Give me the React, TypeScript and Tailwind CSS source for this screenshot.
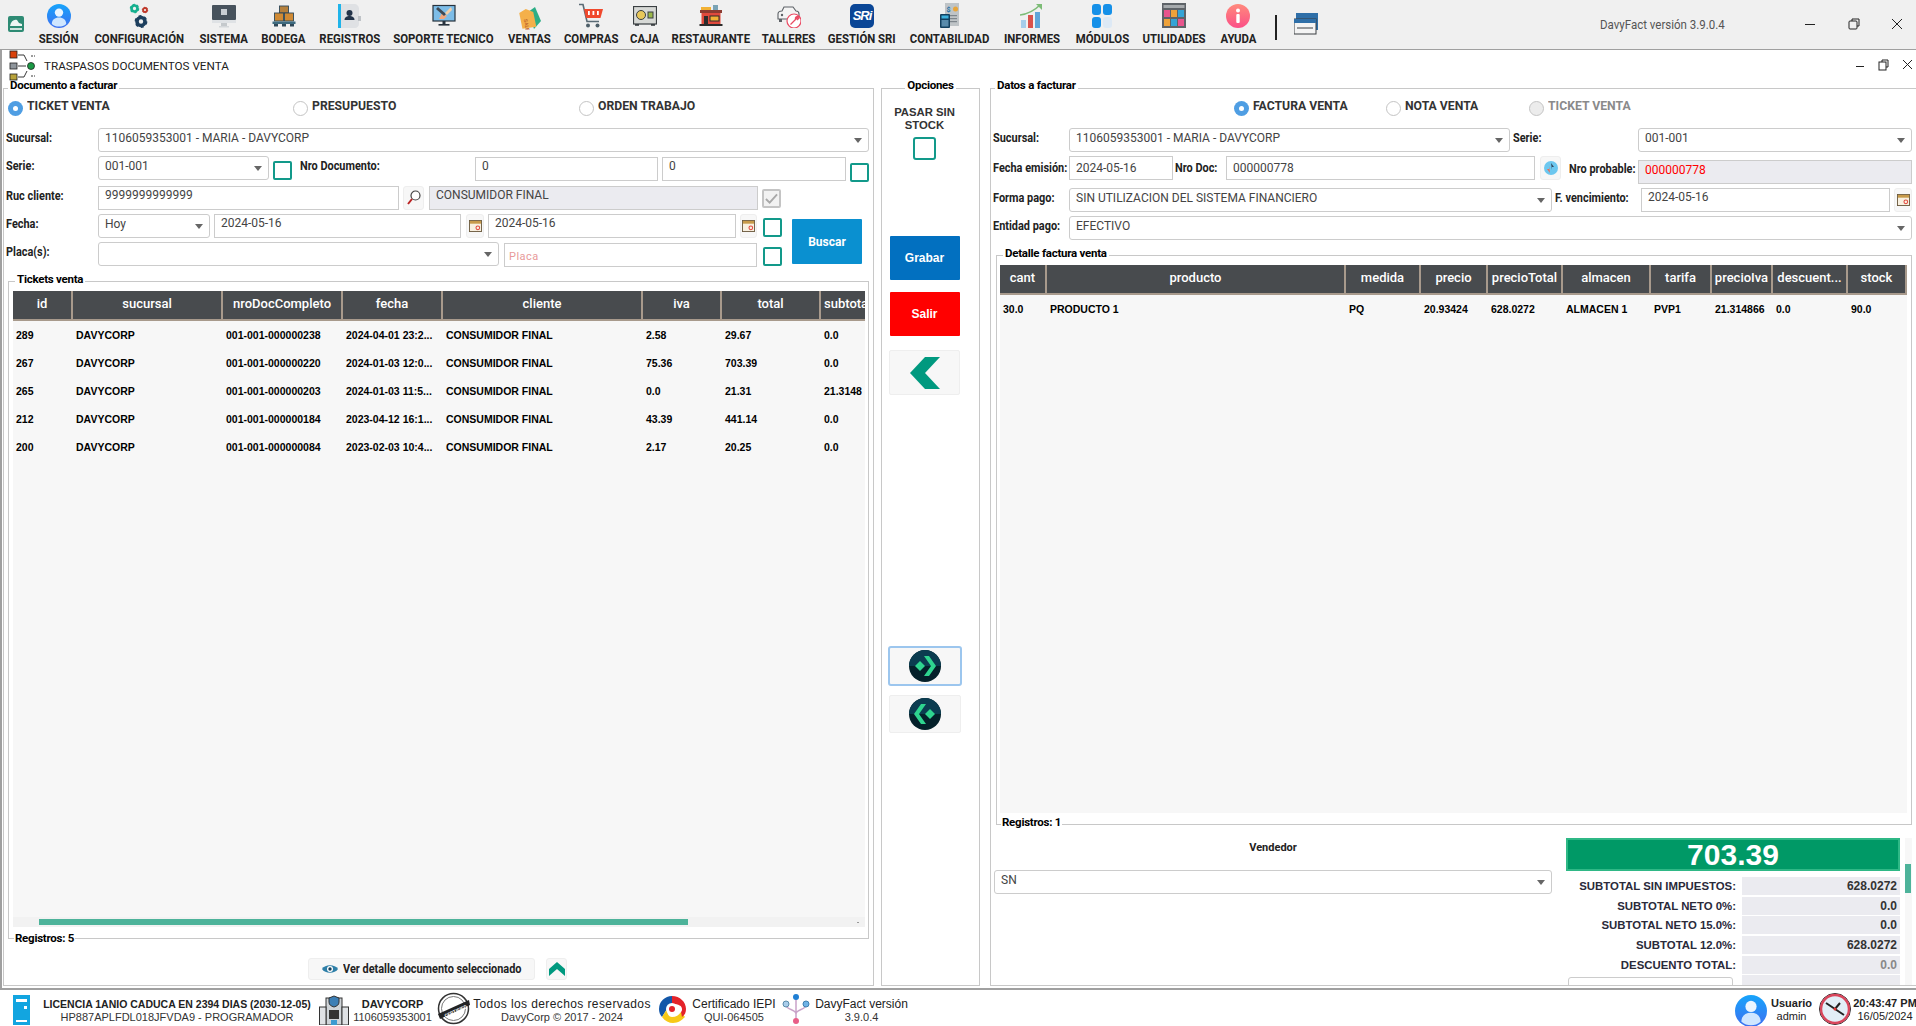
import React from 'react';

const BOLD = "font-['Roboto',sans-serif] font-bold";
const SQUEEZE = 'inline-block origin-left scale-x-[0.91]';

// ---- iconos de la barra superior ----
const UserIcon = ({ id, className }: { id: string; className: string }) => (
  <svg viewBox="0 0 24 24" className={className}>
    <defs>
      <linearGradient id={id} x1="0" y1="0" x2="0" y2="1">
        <stop offset="0" stopColor="#16a4fb" />
        <stop offset="1" stopColor="#3d6ff0" />
      </linearGradient>
    </defs>
    <circle cx="12" cy="12" r="12" fill={`url(#${id})`} />
    <circle cx="12" cy="8.6" r="4.2" fill="#eaf5ff" />
    <path d="M4.8 20c0-4.4 3-6.6 7.2-6.6s7.2 2.2 7.2 6.6c-2 1.8-4.5 2.6-7.2 2.6S6.8 21.8 4.8 20z" fill="#cfe6ff" />
  </svg>
);

const Gear = ({ cx, cy, r, color }: { cx: number; cy: number; r: number; color: string }) => (
  <g>
    <circle cx={cx} cy={cy} r={r} fill="none" stroke={color} strokeWidth={r * 0.9} />
    <circle cx={cx} cy={cy} r={r * 1.35} fill="none" stroke={color} strokeWidth={r * 0.5} strokeDasharray={`${r * 0.7} ${r * 0.7}`} />
  </g>
);

const ConfigIcon = () => (
  <svg viewBox="0 0 24 26" className="h-[26px] w-[24px]">
    <Gear cx={6.5} cy={5.5} r={3} color="#17b08f" />
    <Gear cx={17} cy={7} r={2} color="#c0392b" />
    <Gear cx={13} cy={18.5} r={4} color="#1d3f5e" />
  </svg>
);

const SistemaIcon = () => (
  <svg viewBox="0 0 24 24" className="h-[24px] w-[24px]">
    <rect x="0" y="1" width="24" height="15" rx="1" fill="#47525c" />
    <rect x="9" y="5" width="6" height="6" fill="#c9ced3" />
    <rect x="0" y="16" width="24" height="3" fill="#dfe2e5" />
    <rect x="9" y="19" width="6" height="3" fill="#c5c9cc" />
    <rect x="7" y="22" width="10" height="1.5" fill="#d4d7da" />
  </svg>
);

const BodegaIcon = () => (
  <svg viewBox="0 0 24 24" className="h-[24px] w-[24px]">
    <g stroke="#2f4858" strokeWidth="0.9">
      <rect x="7.5" y="2" width="9" height="7" fill="#b5803c" />
      <rect x="2.5" y="9" width="9" height="8" fill="#d08a34" />
      <rect x="12.5" y="9" width="9" height="8" fill="#d08a34" />
    </g>
    <rect x="0.5" y="17.5" width="23" height="2.5" fill="#3e6b80" />
    <rect x="2" y="20" width="4" height="2.5" fill="#2f4858" />
    <rect x="10" y="20" width="4" height="2.5" fill="#2f4858" />
    <rect x="18" y="20" width="4" height="2.5" fill="#2f4858" />
  </svg>
);

const RegistrosIcon = () => (
  <svg viewBox="0 0 24 26" className="h-[26px] w-[24px]">
    <path d="M1 1h15c3 0 5 2 5 5v15c0 2-2 4-4 4H1z" fill="#dfe1e4" />
    <rect x="0" y="1" width="3" height="24" fill="#1fb4ea" />
    <rect x="20" y="13" width="3" height="5" fill="#bfc3c7" />
    <circle cx="11.5" cy="10" r="3" fill="#23344a" />
    <path d="M6.5 17c0-3 2.5-4 5-4s5 1 5 4z" fill="#23344a" />
  </svg>
);

const SoporteIcon = () => (
  <svg viewBox="0 0 24 24" className="h-[24px] w-[24px]">
    <rect x="1" y="1.5" width="22" height="15.5" fill="#7dbde8" stroke="#27323d" strokeWidth="1.2" />
    <path d="M7 15l3-6 5 3-3 3z" fill="#f1a77d" />
    <path d="M4 5l2-2 8 7-2 2z" fill="#3f4a55" />
    <path d="M13 9l6-6 1 3-5 5z" fill="#f2cfa8" />
    <rect x="10.5" y="17" width="3" height="3" fill="#27323d" />
    <rect x="6.5" y="20" width="11" height="1.6" fill="#27323d" />
  </svg>
);

const VentasIcon = () => (
  <svg viewBox="0 0 24 28" className="h-[28px] w-[24px]">
    <path d="M11 10l7-5 6 14-7 8z" fill="#2dae86" />
    <path d="M3 10l7-3 7 4 1 15H4z" fill="#f4b04a" transform="rotate(-8 10 16)" />
    <text x="8" y="20" fontSize="5" fill="#c2682c" fontWeight="700" fontFamily="Roboto" transform="rotate(80 9 18)">SALE</text>
  </svg>
);

const ComprasIcon = () => (
  <svg viewBox="0 0 26 26" className="h-[26px] w-[26px]">
    <path d="M1 1.5h4l4 17h12" fill="none" stroke="#596a74" strokeWidth="1.6" />
    <path d="M6 6h19l-2.5 9H8z" fill="#f0492d" />
    <rect x="10" y="8" width="1.8" height="4" fill="#fff" />
    <rect x="14.5" y="8" width="1.8" height="4" fill="#fff" />
    <rect x="19" y="8" width="1.8" height="4" fill="#fff" />
    <circle cx="10" cy="22.5" r="2" fill="#4e5f69" />
    <circle cx="19.5" cy="22.5" r="2" fill="#4e5f69" />
  </svg>
);

const CajaIcon = () => (
  <svg viewBox="0 0 24 20" className="h-[20px] w-[24px]">
    <rect x="0.5" y="0.5" width="23" height="17.5" fill="#d7d9d6" stroke="#3a3f42" strokeWidth="1.2" />
    <circle cx="8" cy="9" r="4.5" fill="#e8c75a" stroke="#3a3f42" />
    <rect x="15" y="6" width="5" height="6" fill="#9bb84a" stroke="#3a3f42" />
    <rect x="2" y="18" width="4" height="1.8" fill="#3a3f42" />
    <rect x="18" y="18" width="4" height="1.8" fill="#3a3f42" />
  </svg>
);

const RestauranteIcon = () => (
  <svg viewBox="0 0 24 24" className="h-[24px] w-[24px]">
    <rect x="2" y="3" width="10" height="3" fill="#f2b134" />
    <rect x="14" y="1" width="5" height="5" fill="#7aa3b5" />
    <rect x="1" y="6" width="22" height="3" fill="#8c3b31" />
    <rect x="2.5" y="9" width="19" height="11" fill="#e04a3c" />
    <rect x="5" y="12" width="4" height="8" fill="#2c2c2c" />
    <rect x="11" y="12" width="9" height="5" fill="#f2b134" stroke="#2c2c2c" />
    <rect x="0.5" y="20" width="23" height="2" fill="#2c2c2c" />
  </svg>
);

const TalleresIcon = () => (
  <svg viewBox="0 0 24 24" className="h-[24px] w-[24px]">
    <path d="M5 7l2-4h9l3 4c2 0 3 1 3 3v5H1v-5c0-2 2-3 4-3z" fill="#f4f4f4" stroke="#5c6166" strokeWidth="1.1" />
    <circle cx="5" cy="11" r="1.2" fill="#5c6166" />
    <rect x="2" y="15" width="3" height="3" fill="#5c6166" />
    <circle cx="17" cy="17" r="7" fill="#fff" stroke="#ea4a63" strokeWidth="1.2" />
    <path d="M13.5 20.5l5-5c-.5-2 1-3.5 3-3l-2 2 1 1 2-2" fill="none" stroke="#ea4a63" strokeWidth="1.3" />
  </svg>
);

const SriIcon = () => (
  <div className="flex h-[24px] w-[24px] items-center justify-center rounded-[5px] bg-[#0a4696] text-[13px] font-bold italic tracking-[-1px] text-white font-['Liberation_Sans',sans-serif]">
    SRi
  </div>
);

const ContabilidadIcon = () => (
  <svg viewBox="0 0 20 26" className="h-[26px] w-[20px]">
    <rect x="5" y="0" width="14" height="23" fill="#bfc4c7" />
    <rect x="7" y="12" width="10" height="1.2" fill="#7e868c" />
    <rect x="9" y="15" width="8" height="1.2" fill="#7e868c" />
    <rect x="9" y="18" width="8" height="1.2" fill="#7e868c" />
    <circle cx="15.5" cy="6" r="2.5" fill="#e8a53a" />
    <text x="6.5" y="9" fontSize="7" fontWeight="700" fill="#1d6fa5" fontFamily="Roboto">$</text>
    <rect x="0" y="11" width="10" height="14" rx="1" fill="#14405f" />
    <rect x="1.5" y="12.5" width="7" height="3" fill="#3db0dc" />
    <rect x="1.5" y="17" width="7" height="6.5" fill="#5a8bab" />
  </svg>
);

const InformesIcon = () => (
  <svg viewBox="0 0 24 26" className="h-[26px] w-[24px]">
    <rect x="1" y="17" width="5" height="8" fill="#a5cdea" />
    <rect x="8" y="12" width="5" height="13" fill="#d9524c" />
    <rect x="15" y="9" width="5" height="16" fill="#5fa6d9" />
    <path d="M0 12c8-1 14-4 20-10" fill="none" stroke="#7cbc76" strokeWidth="1.5" />
    <path d="M16 1h6v6z" fill="#7cbc76" />
  </svg>
);

const ModulosIcon = () => (
  <svg viewBox="0 0 20 24" className="h-[24px] w-[20px]">
    <rect x="0" y="0" width="9" height="11" rx="3" fill="#1590e8" />
    <rect x="11" y="0" width="9" height="11" rx="3" fill="#1590e8" />
    <rect x="0" y="13" width="9" height="11" rx="3" fill="#1590e8" />
    <rect x="11" y="13" width="9" height="11" rx="3" fill="#dde9f5" />
  </svg>
);

const UtilidadesIcon = () => (
  <svg viewBox="0 0 24 26" className="h-[26px] w-[24px]">
    <rect x="0" y="0" width="24" height="25" fill="#5e6368" />
    <rect x="1.5" y="2" width="21" height="3" fill="#a6aaad" />
    <rect x="2" y="7" width="6" height="7" fill="#e8558d" />
    <rect x="9" y="7" width="6" height="7" fill="#eea23a" />
    <rect x="16" y="7" width="6" height="7" fill="#34a4d6" />
    <rect x="2" y="16" width="6" height="7" fill="#eea23a" />
    <rect x="9" y="16" width="6" height="7" fill="#34a4d6" />
    <rect x="16" y="16" width="6" height="7" fill="#e8558d" />
  </svg>
);

const AyudaIcon = () => (
  <svg viewBox="0 0 24 24" className="h-[24px] w-[24px]">
    <defs>
      <linearGradient id="ay" x1="0" y1="0" x2="0" y2="1">
        <stop offset="0" stopColor="#ff8a7c" />
        <stop offset="1" stopColor="#fb4f87" />
      </linearGradient>
    </defs>
    <circle cx="12" cy="12" r="12" fill="url(#ay)" />
    <circle cx="12" cy="6.5" r="2" fill="#fff" />
    <rect x="10.3" y="10" width="3.4" height="9" rx="1" fill="#fff" />
  </svg>
);

const menu: { label: string; w: string; icon: React.ReactNode }[] = [
  { label: 'SESIÓN', w: 'w-[38px]', icon: <UserIcon id="u1" className="h-[24px] w-[24px]" /> },
  { label: 'CONFIGURACIÓN', w: 'w-[91px]', icon: <ConfigIcon /> },
  { label: 'SISTEMA', w: 'w-[45px]', icon: <SistemaIcon /> },
  { label: 'BODEGA', w: 'w-[43px]', icon: <BodegaIcon /> },
  { label: 'REGISTROS', w: 'w-[58px]', icon: <RegistrosIcon /> },
  { label: 'SOPORTE TECNICO', w: 'w-[97px]', icon: <SoporteIcon /> },
  { label: 'VENTAS', w: 'w-[42px]', icon: <VentasIcon /> },
  { label: 'COMPRAS', w: 'w-[50px]', icon: <ComprasIcon /> },
  { label: 'CAJA', w: 'w-[25px]', icon: <CajaIcon /> },
  { label: 'RESTAURANTE', w: 'w-[76px]', icon: <RestauranteIcon /> },
  { label: 'TALLERES', w: 'w-[48px]', icon: <TalleresIcon /> },
  { label: 'GESTIÓN SRI', w: 'w-[66px]', icon: <SriIcon /> },
  { label: 'CONTABILIDAD', w: 'w-[77px]', icon: <ContabilidadIcon /> },
  { label: 'INFORMES', w: 'w-[56px]', icon: <InformesIcon /> },
  { label: 'MÓDULOS', w: 'w-[52px]', icon: <ModulosIcon /> },
  { label: 'UTILIDADES', w: 'w-[60px]', icon: <UtilidadesIcon /> },
  { label: 'AYUDA', w: 'w-[36px]', icon: <AyudaIcon /> },
];

// ---- controles de formulario ----
const Label = ({ children, className = '' }: { children: React.ReactNode; className?: string }) => (
  <div className={`shrink-0 whitespace-nowrap pt-[1px] text-[12px] leading-[18px] text-[#222] ${BOLD} ${className}`}>
    <span className={SQUEEZE}>{children}</span>
  </div>
);

const Arrow = () => <span className="absolute right-[6px] top-[9px] h-0 w-0 border-x-[4px] border-t-[5px] border-x-transparent border-t-[#666]" />;

const fieldText = "truncate px-[6px] text-[12px] leading-[16px] text-[#444] font-['Roboto',sans-serif]";

const Select = ({ value, className }: { value: string; className: string }) => (
  <div className={`relative h-[24px] shrink-0 rounded-[3px] border border-[#ccc] bg-white pt-[1px] ${fieldText} ${className}`}>
    {value}
    <Arrow />
  </div>
);

// pt se pasa siempre en className: cada campo tiene su propio ajuste vertical
const Input = ({ value, className }: { value: string; className: string }) => (
  <div className={`h-[24px] shrink-0 border border-[#ccc] bg-white ${fieldText} ${className}`}>{value}</div>
);

const Check = ({ className = '', size = 'h-[19px] w-[19px]' }: { className?: string; size?: string }) => (
  <div className={`shrink-0 rounded-[2px] border-2 border-[#12998a] bg-white ${size} ${className}`} />
);

const CalendarButton = ({ className }: { className: string }) => (
  <div className={`flex h-[24px] shrink-0 items-center justify-center rounded-[3px] border border-[#eee] bg-[#f7f7f7] ${className}`}>
    <svg viewBox="0 0 14 13" className="h-[12px] w-[13px]">
      <rect x="0.5" y="0.5" width="13" height="12" fill="#f8f0e0" stroke="#6b5a3e" />
      <rect x="1" y="1" width="12" height="3" fill="#c79a4a" />
      <circle cx="9.5" cy="8.5" r="2" fill="none" stroke="#e0453a" strokeWidth="1.1" />
    </svg>
  </div>
);

const Radio = ({ state = 'off', className = '' }: { state?: 'on' | 'off' | 'disabled'; className?: string }) => {
  if (state === 'on') {
    return (
      <span className={`flex h-[15px] w-[15px] shrink-0 items-center justify-center rounded-full bg-[#4f9ee3] ${className}`}>
        <span className="h-[5px] w-[5px] rounded-full bg-white" />
      </span>
    );
  }
  return <span className={`h-[15px] w-[15px] shrink-0 rounded-full border border-[#c4c4c4] ${state === 'disabled' ? 'bg-[#ececec]' : 'bg-white'} ${className}`} />;
};

const RadioOption = ({ label, state, className }: { label: string; state?: 'on' | 'off' | 'disabled'; className: string }) => (
  <div className={`flex shrink-0 gap-[4px] ${className}`}>
    <Radio state={state} className="mt-[3px]" />
    <span className={`origin-left scale-x-[0.94] whitespace-nowrap text-[13px] leading-[16px] ${BOLD} ${state === 'disabled' ? 'text-[#8a8a8a]' : 'text-[#333]'}`}>{label}</span>
  </div>
);

const legendText = `text-[11.5px] leading-[14px] tracking-[-0.25px] text-black ${BOLD}`;

const Legend = ({ children, className = '' }: { children: React.ReactNode; className?: string }) => (
  <legend className={`h-[20px] px-[2px] ${legendText} ${className}`}>{children}</legend>
);

// ---- tablas ----
const ticketCols = 'grid grid-cols-[60px_150px_120px_100px_200px_79px_99px_44px]';
const detalleCols = 'grid grid-cols-[47px_299px_75px_67px_75px_88px_61px_61px_75px_59px]';

const HeaderRow = ({ cols, names }: { cols: string; names: string[] }) => (
  <div className={`${cols} h-[30px] border-b-2 border-[#a89a8c] bg-[#484b4e]`}>
    {names.map((n) => (
      <div
        key={n}
        className={`overflow-hidden whitespace-nowrap pt-[3px] text-[13px] font-medium leading-[20px] text-white font-['Roboto',sans-serif] ${
          n === 'subtotal' ? 'pl-[3px] text-left' : 'border-r-2 border-[#a89a8c] text-center'
        }`}
      >
        {n}
      </div>
    ))}
  </div>
);

const BodyRow = ({ cols, cells }: { cols: string; cells: string[] }) => (
  <div className={`${cols} h-[28px] items-center pt-[2px] text-[10.5px] font-bold text-black font-['Liberation_Sans',sans-serif]`}>
    {cells.map((c, i) => (
      <div key={i} className="overflow-hidden whitespace-nowrap pl-[3px]">
        {c}
      </div>
    ))}
  </div>
);

const tickets = [
  ['289', 'DAVYCORP', '001-001-000000238', '2024-04-01 23:2...', 'CONSUMIDOR FINAL', '2.58', '29.67', '0.0'],
  ['267', 'DAVYCORP', '001-001-000000220', '2024-01-03 12:0...', 'CONSUMIDOR FINAL', '75.36', '703.39', '0.0'],
  ['265', 'DAVYCORP', '001-001-000000203', '2024-01-03 11:5...', 'CONSUMIDOR FINAL', '0.0', '21.31', '21.3148'],
  ['212', 'DAVYCORP', '001-001-000000184', '2023-04-12 16:1...', 'CONSUMIDOR FINAL', '43.39', '441.14', '0.0'],
  ['200', 'DAVYCORP', '001-001-000000084', '2023-02-03 10:4...', 'CONSUMIDOR FINAL', '2.17', '20.25', '0.0'],
];

const ChevronLeft = () => (
  <svg viewBox="0 0 30 32" className="h-[32px] w-[30px]">
    <path d="M30 0L15 16l15 16H15L0 16 15 0z" fill="#00997f" />
  </svg>
);

const ChevronUp = () => (
  <svg viewBox="0 0 16 14" className="h-[14px] w-[16px]">
    <path d="M8 0l8 7v7L8 7l-8 7V7z" fill="#00997f" />
  </svg>
);

const RoundNav = ({ flip }: { flip?: boolean }) => (
  <svg viewBox="0 0 32 32" className="h-[32px] w-[32px]">
    <circle cx="16" cy="16" r="16" fill="#04202a" />
    <path d="M0 16a16 16 0 0 1 32 0z" fill="#0b3c50" />
    <g transform={flip ? 'rotate(180 16 16)' : undefined} fill="#2ed48f">
      <path d="M6 16l5-5 5 5-5 5z" />
      <path d="M15 6h5l7 10-7 10h-5l7-10z" />
    </g>
  </svg>
);

const totales = [
  ['SUBTOTAL SIN IMPUESTOS:', '628.0272'],
  ['SUBTOTAL NETO 0%:', '0.0'],
  ['SUBTOTAL NETO 15.0%:', '0.0'],
  ['SUBTOTAL 12.0%:', '628.0272'],
  ['DESCUENTO TOTAL:', '0.0'],
];

// ---- pie ----
const FooterText = ({ top, bottom, className, topClass }: { top: string; bottom: string; className: string; topClass: string }) => (
  <div className={`flex shrink-0 flex-col items-center whitespace-nowrap text-[#222] font-['Liberation_Sans',sans-serif] ${className}`}>
    <span className={`mt-[7px] leading-[14px] ${topClass}`}>{top}</span>
    <span className="text-[11px] leading-[13px] text-[#333]">{bottom}</span>
  </div>
);

const App: React.FC = () => {
  return (
    <div className="flex h-[1026px] w-[1916px] flex-col overflow-hidden bg-white">
      {/* Barra superior */}
      <header className="flex h-[50px] shrink-0 border-b border-[#a0a0a0] bg-[#f0f0f0]">
        <svg viewBox="0 0 16 16" className="ml-[8px] mt-[16px] h-[16px] w-[16px] shrink-0">
          <rect width="16" height="16" rx="2" fill="#2e8b74" />
          <path d="M2 10c1-5 4-7 7-6l2 3 3 1v2z" fill="#eef6f3" />
          <rect x="2" y="12" width="12" height="2" fill="#cfe3dd" />
        </svg>
        <nav className="ml-[16px] flex gap-[16px]">
          {menu.map((m) => (
            <div key={m.label} className={`flex shrink-0 flex-col items-center ${m.w}`}>
              <div className="flex h-[30px] w-[30px] shrink-0 items-center justify-center pt-[1px]">{m.icon}</div>
              <span className={`mt-[1px] scale-x-[0.875] whitespace-nowrap text-[13px] leading-[15px] text-[#222] ${BOLD}`}>{m.label}</span>
            </div>
          ))}
        </nav>
        <div className="ml-[19px] mt-[15px] h-[25px] w-[2px] bg-[#222]" />
        <svg viewBox="0 0 24 22" className="ml-[17px] mt-[13px] h-[22px] w-[24px]">
          <rect x="2" y="0" width="22" height="17" fill="#2f6fa8" />
          <rect x="0" y="6" width="22" height="15" fill="#f4f4f4" stroke="#3a3f42" />
          <rect x="0" y="6" width="22" height="4" fill="#2f6fa8" />
          <path d="M3 15h16" stroke="#3a3f42" />
        </svg>
        <div className="ml-[282px] mt-[16px] w-[125px] shrink-0 whitespace-nowrap text-[13px] leading-[18px] text-[#555] font-['Roboto',sans-serif]">
          <span className="inline-block origin-left scale-x-[0.885]">DavyFact versión 3.9.0.4</span>
        </div>
        <svg viewBox="0 0 100 12" className="ml-[80px] mt-[18px] h-[12px] w-[100px] shrink-0" fill="none" stroke="#222">
          <path d="M0 6.5h10" />
          <rect x="44" y="3" width="8" height="8" rx="1" />
          <path d="M47 3V1h7v7h-2" />
          <path d="M87 1l10 10M97 1L87 11" />
        </svg>
      </header>

      {/* Ventana interna */}
      <main className="flex h-[940px] shrink-0 flex-col border-b-2 border-l-2 border-[#a0a0a0]">
        <div className="flex h-[28px] shrink-0">
          <svg viewBox="0 0 32 31" className="ml-[7px] h-[31px] w-[32px] shrink-0">
            <rect x="1" y="1" width="7" height="7" fill="#d9420b" stroke="#222" strokeWidth="0.8" />
            <rect x="1" y="13" width="7" height="6" fill="#8e959b" stroke="#222" strokeWidth="0.8" />
            <rect x="1" y="24" width="7" height="6" fill="#b7a23a" stroke="#222" strokeWidth="0.8" />
            <circle cx="22" cy="16" r="3.5" fill="#1a9a45" stroke="#222" strokeWidth="0.8" />
            <path d="M9 5h6l3 6M9 16h8M9 27h6l3-6" fill="none" stroke="#222" strokeWidth="0.9" />
            <path d="M22 6h4M22 26h4" fill="none" stroke="#222" strokeWidth="0.9" strokeDasharray="2 1" />
          </svg>
          <span className="ml-[3px] mt-[9px] whitespace-nowrap text-[11.7px] leading-[15px] text-[#222] font-['Roboto',sans-serif]">TRASPASOS DOCUMENTOS VENTA</span>
          <svg viewBox="0 0 60 12" className="ml-auto mt-[9px] h-[12px] w-[60px] shrink-0" fill="none" stroke="#222">
            <path d="M0 7.5h8" />
            <rect x="23" y="3" width="7" height="8" />
            <path d="M26 3V1h6v7h-2" />
            <path d="M47 1l9 9M56 1l-9 9" />
          </svg>
        </div>

        <div className="flex">
          {/* Documento a facturar */}
          <fieldset className="ml-[1px] h-[908px] w-[871px] min-w-0 shrink-0 border border-[#c8c8c8]">
            <Legend className="ml-[4px]">Documento a facturar</Legend>
            <div className="flex h-[18px] pl-[4px]">
              <RadioOption label="TICKET VENTA" state="on" className="w-[285px]" />
              <RadioOption label="PRESUPUESTO" className="w-[286px]" />
              <RadioOption label="ORDEN TRABAJO" className="w-[200px]" />
            </div>
            <div className="mt-[12px] flex h-[24px] pl-[2px]">
              <Label className="w-[92px]">Sucursal:</Label>
              <Select value="1106059353001 - MARIA - DAVYCORP" className="w-[771px]" />
            </div>
            <div className="mt-[4px] flex h-[24px] pl-[2px]">
              <Label className="w-[92px]">Serie:</Label>
              <Select value="001-001" className="w-[171px]" />
              <Check className="ml-[4px] mt-[5px]" />
              <Label className="ml-[8px] w-[175px]">Nro Documento:</Label>
              <Input value="0" className="mt-[1px] w-[183px] pt-0" />
              <Input value="0" className="ml-[4px] mt-[1px] w-[184px] pt-0" />
              <Check className="ml-[4px] mt-[7px]" />
            </div>
            <div className="mt-[6px] flex h-[24px] pl-[2px]">
              <Label className="w-[92px]">Ruc cliente:</Label>
              <Input value="9999999999999" className="w-[301px] pt-0" />
              <div className="ml-[4px] flex h-[24px] w-[21px] shrink-0 items-center justify-center rounded-[3px] border border-[#eee] bg-[#f7f7f7]">
                <svg viewBox="0 0 14 16" className="h-[16px] w-[14px]">
                  <circle cx="8.5" cy="5.5" r="4.5" fill="#fff" stroke="#444" strokeWidth="1.2" />
                  <path d="M5 9l-4 5" stroke="#b22" strokeWidth="2" />
                </svg>
              </div>
              <div className={`ml-[5px] h-[24px] w-[329px] shrink-0 border border-[#ccc] bg-[#ebebf0] ${fieldText}`}>CONSUMIDOR FINAL</div>
              <div className="ml-[4px] mt-[3px] flex h-[19px] w-[19px] shrink-0 items-center justify-center rounded-[2px] border-2 border-[#c4c4c4] bg-[#f2f2f2]">
                <svg viewBox="0 0 14 12" className="h-[12px] w-[13px]">
                  <path d="M1 6l4 4 8-9" fill="none" stroke="#a8a8a8" strokeWidth="2" />
                </svg>
              </div>
            </div>
            <div className="mt-[4px] flex pl-[2px]">
              <div className="w-[775px] shrink-0">
                <div className="flex h-[24px]">
                  <Label className="w-[92px]">Fecha:</Label>
                  <Select value="Hoy" className="w-[112px]" />
                  <Input value="2024-05-16" className="ml-[4px] w-[247px] pt-0" />
                  <CalendarButton className="ml-[5px] w-[18px]" />
                  <Input value="2024-05-16" className="ml-[4px] w-[248px] pt-0" />
                  <CalendarButton className="ml-[4px] w-[17px]" />
                  <Check className="ml-[6px] mt-[4px]" />
                </div>
                <div className="mt-[4px] flex h-[24px]">
                  <Label className="w-[92px]">Placa(s):</Label>
                  <Select value="" className="w-[401px]" />
                  <div className="ml-[5px] mt-[1px] h-[24px] w-[253px] shrink-0 border border-[#ccc] bg-white px-[4px] pt-[5px] text-[11px] leading-[15px] tracking-[0.5px] text-[#e89a9a] font-['Roboto',sans-serif]">Placa</div>
                  <Check className="ml-[6px] mt-[5px]" />
                </div>
              </div>
              <button className={`ml-[11px] mt-[5px] h-[45px] w-[70px] shrink-0 rounded-[1px] bg-[#0a90d0] text-[12px] text-white ${BOLD}`}>Buscar</button>
            </div>

            {/* Tickets venta */}
            <fieldset className="relative ml-[4px] mt-[6px] h-[667px] w-[861px] min-w-0 border border-[#c8c8c8]">
              <legend className={`ml-[6px] h-[18px] px-[2px] ${legendText}`}>Tickets venta</legend>
              <div className="ml-[4px] mt-[1px] w-[852px]">
                <HeaderRow cols={ticketCols} names={['id', 'sucursal', 'nroDocCompleto', 'fecha', 'cliente', 'iva', 'total', 'subtotal']} />
                <div className="flex h-[606px] flex-col bg-[#f7f7f7]">
                  {tickets.map((t) => (
                    <BodyRow key={t[0]} cols={ticketCols} cells={t} />
                  ))}
                  <div className="mt-auto flex h-[10px] items-center bg-[#f2f2f2]">
                    <div className="ml-[26px] h-[6px] w-[649px] bg-[#4db39a]" />
                    <div className="ml-auto mr-[6px] h-[1px] w-[2px] bg-[#999]" />
                  </div>
                </div>
              </div>
              <span className={`absolute bottom-[-7px] left-[5px] bg-white px-[1px] ${legendText}`}>Registros: 5</span>
            </fieldset>

            <div className="mt-[19px] flex pl-[304px]">
              <button className="flex h-[22px] w-[227px] items-center justify-center gap-[5px] rounded-[3px] border border-[#eee] bg-[#f7f7f7]">
                <svg viewBox="0 0 16 10" className="h-[10px] w-[16px] shrink-0">
                  <path d="M0 5c3-5 13-5 16 0-3 5-13 5-16 0z" fill="#2e7fa8" />
                  <circle cx="8" cy="5" r="3" fill="#fff" />
                  <circle cx="8" cy="5" r="1.7" fill="#17405a" />
                </svg>
                <span className={`w-[178px] shrink-0 whitespace-nowrap text-left text-[12px] leading-[18px] text-[#222] ${BOLD}`}>
                  <span className={SQUEEZE}>Ver detalle documento seleccionado</span>
                </span>
              </button>
              <div className="ml-[11px] flex h-[22px] w-[21px] items-center justify-center rounded-[3px] border border-[#eee] bg-[#f7f7f7]">
                <ChevronUp />
              </div>
            </div>
          </fieldset>

          {/* Opciones */}
          <fieldset className="ml-[7px] h-[908px] w-[99px] min-w-0 shrink-0 border border-[#c8c8c8]">
            <Legend className="mx-auto">Opciones</Legend>
            <div className="flex flex-col items-center pr-[12px]">
              <div className="mt-[8px] w-[70px] text-center text-[11.3px] font-bold leading-[13px] text-[#333] font-['Liberation_Sans',sans-serif]">PASAR SIN STOCK</div>
              <Check className="mt-[5px] rounded-[3px]" size="h-[23px] w-[23px]" />
              <button className="mt-[76px] h-[44px] w-[70px] rounded-[1px] bg-[#0270c0] text-[12px] font-bold text-white font-['Liberation_Sans',sans-serif]">Grabar</button>
              <button className="mt-[12px] h-[44px] w-[70px] rounded-[1px] bg-[#ff0000] text-[12px] font-bold text-white font-['Liberation_Sans',sans-serif]">Salir</button>
              <div className="mt-[14px] flex h-[45px] w-[71px] items-center justify-center rounded-[2px] border border-[#eee] bg-[#f7f7f7]">
                <ChevronLeft />
              </div>
              <div className="mt-[251px] flex h-[40px] w-[74px] items-center justify-center rounded-[3px] border-2 border-[#9cc6ee] bg-[#f7f7f7]">
                <RoundNav />
              </div>
              <div className="mt-[9px] flex h-[38px] w-[72px] items-center justify-center rounded-[2px] border border-[#eee] bg-[#f7f7f7]">
                <RoundNav flip />
              </div>
            </div>
          </fieldset>

          {/* Datos a facturar */}
          <fieldset className="ml-[10px] h-[908px] w-[930px] min-w-0 shrink-0 border border-[#c8c8c8]">
            <Legend className="ml-[4px]">Datos a facturar</Legend>
            <div className="flex h-[18px] pl-[243px]">
              <RadioOption label="FACTURA VENTA" state="on" className="w-[152px]" />
              <RadioOption label="NOTA VENTA" className="w-[143px]" />
              <RadioOption label="TICKET VENTA" state="disabled" className="w-[120px]" />
            </div>
            <div className="mt-[12px] flex h-[24px] pl-[2px]">
              <Label className="w-[76px]">Sucursal:</Label>
              <Select value="1106059353001 - MARIA - DAVYCORP" className="w-[441px]" />
              <Label className="ml-[3px] w-[125px]">Serie:</Label>
              <Select value="001-001" className="w-[274px]" />
            </div>
            <div className="mt-[4px] flex h-[24px] pl-[2px]">
              <Label className="w-[76px] pt-[3px]">Fecha emisión:</Label>
              <Input value="2024-05-16" className="w-[104px] pt-[3px]" />
              <Label className="ml-[2px] w-[51px] pt-[3px]">Nro Doc:</Label>
              <Input value="000000778" className="w-[309px] pt-[3px]" />
              <div className="ml-[5px] flex h-[24px] w-[21px] shrink-0 items-center justify-center rounded-[3px] border border-[#eee] bg-[#f7f7f7]">
                <svg viewBox="0 0 14 14" className="h-[14px] w-[14px]">
                  <circle cx="7" cy="7" r="7" fill="#6cc7ef" />
                  <path d="M7 2l3 4-2 0 0 3z" fill="#33475b" />
                  <path d="M6 12L3 8l2 0 0-3z" fill="#ef6b4e" />
                </svg>
              </div>
              <Label className="ml-[8px] mt-[3px] w-[69px]">Nro probable:</Label>
              <div className="mt-[4px] h-[24px] w-[274px] shrink-0 border border-[#ccc] bg-[#ebebf0] px-[6px] pt-[1px] text-[12px] leading-[16px] text-[#f00] font-['Roboto',sans-serif]">000000778</div>
            </div>
            <div className="mt-[8px] flex h-[24px] pl-[2px]">
              <Label className="w-[76px]">Forma pago:</Label>
              <Select value="SIN UTILIZACION DEL SISTEMA FINANCIERO" className="w-[483px]" />
              <Label className="ml-[3px] w-[86px]">F. vencimiento:</Label>
              <Input value="2024-05-16" className="w-[249px] pt-0" />
              <CalendarButton className="ml-[4px] w-[18px]" />
            </div>
            <div className="mt-[4px] flex h-[24px] pl-[2px]">
              <Label className="w-[76px]">Entidad pago:</Label>
              <Select value="EFECTIVO" className="w-[843px]" />
            </div>

            {/* Detalle factura venta */}
            <fieldset className="relative ml-[5px] mt-[6px] h-[579px] w-[916px] min-w-0 border border-[#c8c8c8]">
              <legend className={`ml-[6px] h-[18px] px-[2px] ${legendText}`}>Detalle factura venta</legend>
              <div className="ml-[3px] mt-[1px] w-[907px]">
                <HeaderRow cols={detalleCols} names={['cant', 'producto', 'medida', 'precio', 'precioTotal', 'almacen', 'tarifa', 'precioIva', 'descuent...', 'stock']} />
                <div className="h-[518px] bg-[#f7f7f7]">
                  <BodyRow cols={detalleCols} cells={['30.0', 'PRODUCTO 1', 'PQ', '20.93424', '628.0272', 'ALMACEN 1', 'PVP1', '21.314866', '0.0', '90.0']} />
                </div>
              </div>
              <span className={`absolute bottom-[-5px] left-[4px] bg-white px-[1px] ${legendText}`}>Registros: 1</span>
            </fieldset>

            <div className="mt-[13px] flex h-[147px] overflow-hidden">
              <div className="ml-[3px] w-[558px] shrink-0">
                <div className={`h-[20px] text-center text-[11px] leading-[20px] text-[#222] ${BOLD}`}>Vendedor</div>
                <Select value="SN" className="mt-[12px] w-[558px]" />
              </div>
              <div className="ml-[14px] w-[334px] shrink-0">
                <div className="flex h-[33px] items-center justify-center border-2 border-[#2fb886] bg-[#009966] text-[30px] font-bold leading-none text-white font-['Liberation_Sans',sans-serif]">703.39</div>
                <div className="mt-[6px] flex flex-col gap-[1.7px]">
                  {totales.map(([k, v]) => (
                    <div key={k} className="grid h-[18px] grid-cols-[170px_6px_158px] font-bold leading-[18px] text-[#2a2a3a] font-['Liberation_Sans',sans-serif]">
                      <div className="whitespace-nowrap text-right text-[11.4px]">{k}</div>
                      <div />
                      <div className={`bg-[#ebebf0] pr-[3px] text-right text-[12px] ${k === 'DESCUENTO TOTAL:' ? 'text-[#888]' : 'text-[#333]'}`}>{v}</div>
                    </div>
                  ))}
                  <div className="grid h-[18px] grid-cols-[170px_6px_158px]">
                    <div className="ml-[2px] mt-[2px] h-[24px] w-[165px] rounded-[3px] border border-[#ccc]" />
                    <div />
                    <div className="bg-[#ebebf0]" />
                  </div>
                </div>
              </div>
              <div className="ml-[5px] h-[147px] w-[7px] shrink-0 bg-[#f7f7f7] pt-[26px]">
                <div className="h-[29px] w-[6px] bg-[#4db39a]" />
              </div>
            </div>
          </fieldset>
        </div>
      </main>

      {/* Pie */}
      <footer className="flex h-[36px] shrink-0 overflow-hidden">
        <svg viewBox="0 0 17 30" className="ml-[13px] mt-[5px] h-[30px] w-[17px] shrink-0">
          <rect width="17" height="30" fill="#12a5e0" />
          <rect x="3" y="4" width="11" height="3" fill="#fff" />
          <rect x="11" y="11" width="3" height="3" fill="#fff" />
          <rect x="3" y="25" width="11" height="2" fill="#fff" />
        </svg>
        <FooterText top="LICENCIA 1ANIO CADUCA EN 2394 DIAS (2030-12-05)" bottom="HP887APLFDL018JFVDA9 - PROGRAMADOR" className="ml-[12px] w-[270px]" topClass="text-[10.5px] font-bold" />
        <svg viewBox="0 0 30 30" className="ml-[7px] mt-[5px] h-[30px] w-[30px] shrink-0">
          <rect x="7" y="3" width="16" height="27" fill="#cfd4d8" stroke="#333" />
          <rect x="0.5" y="12" width="6.5" height="18" fill="#dfe2e5" stroke="#333" />
          <rect x="23" y="12" width="6.5" height="18" fill="#dfe2e5" stroke="#333" />
          <path d="M15 1l5 2v4c0 3-2 4-5 5-3-1-5-2-5-5V3z" fill="#3c7fb5" stroke="#333" />
          <rect x="10" y="15" width="10" height="9" fill="#333" />
          <rect x="12" y="25" width="6" height="5" fill="#3c9bd0" />
        </svg>
        <FooterText top="DAVYCORP" bottom="1106059353001" className="ml-[5px] w-[77px]" topClass="text-[11px] font-bold" />
        <svg viewBox="0 0 33 33" className="ml-[6px] mt-[2px] h-[33px] w-[33px] shrink-0">
          <circle cx="16.5" cy="16.5" r="15" fill="#fff" stroke="#333" strokeWidth="1.5" />
          <circle cx="16.5" cy="16.5" r="12" fill="none" stroke="#777" />
          <path d="M1 22L32 8l1 5L3 27z" fill="#222" />
          <text x="6" y="22" fontSize="5" fontWeight="700" fill="#fff" fontFamily="Roboto" transform="rotate(-24 16 18)">CERTIFIED</text>
        </svg>
        <FooterText top="Todos los derechos reservados" bottom="DavyCorp © 2017 - 2024" className="ml-[3px] w-[178px]" topClass="text-[12px] tracking-[0.4px]" />
        <svg viewBox="0 0 30 30" className="ml-[6px] mt-[4px] h-[30px] w-[30px] shrink-0">
          <path d="M15 2a13 13 0 0 0-13 13c0 3 1 6 3 8l5-8c0-3 2-5 5-5z" fill="#1357a8" />
          <path d="M5 23c3 4 7 6 11 6 5 0 9-3 12-6l-4-5c-2 3-5 5-9 5-3 0-5-3-5-8z" fill="#f7c918" />
          <path d="M15 2c8 0 14 6 14 13 0 3-1 6-4 8l-1-5c1-1 1-2 1-3 0-3-3-5-10-5z" fill="#e4232a" />
          <circle cx="15" cy="15" r="6" fill="#fff" />
          <circle cx="15" cy="15" r="3" fill="#e4232a" />
        </svg>
        <FooterText top="Certificado IEPI" bottom="QUI-064505" className="ml-[6px] w-[82px]" topClass="text-[12px]" />
        <svg viewBox="0 0 28 32" className="ml-[7px] mt-[3px] h-[32px] w-[28px] shrink-0">
          <path d="M14 4v24M4 12c0 5 10 4 10 9 0-5 10-4 10-9" fill="none" stroke="#c9a3c9" strokeWidth="1.5" />
          <circle cx="14" cy="4" r="3" fill="#1f7fd4" />
          <circle cx="4" cy="11" r="3" fill="#a9cdea" stroke="#5a8bab" />
          <circle cx="24" cy="11" r="3" fill="#6fb3e6" stroke="#3e7fb0" />
          <circle cx="14" cy="28" r="3" fill="#e85d87" />
        </svg>
        <FooterText top="DavyFact versión" bottom="3.9.0.4" className="ml-[6px] w-[91px]" topClass="text-[12px]" />
        <UserIcon id="u2" className="ml-[828px] mt-[5px] h-[32px] w-[32px] shrink-0" />
        <div className="ml-[4px] flex w-[41px] shrink-0 flex-col items-center text-[#222] font-['Liberation_Sans',sans-serif]">
          <span className="mt-[6px] text-[11px] font-bold leading-[14px]">Usuario</span>
          <span className="text-[11px] leading-[13px]">admin</span>
        </div>
        <svg viewBox="0 0 34 34" className="ml-[6px] mt-[2px] h-[34px] w-[34px] shrink-0">
          <circle cx="17" cy="17" r="15.5" fill="#e3eef7" stroke="#222" strokeWidth="1" />
          <circle cx="17" cy="17" r="14" fill="none" stroke="#d9465c" strokeWidth="2.5" />
          <path d="M8 11l9 6 9 6M17 17l5-6" fill="none" stroke="#222" strokeWidth="2" />
          <circle cx="17" cy="17" r="1.5" fill="#d33" />
        </svg>
        <div className="ml-[2px] flex w-[62px] shrink-0 flex-col items-center whitespace-nowrap text-[#222] font-['Liberation_Sans',sans-serif]">
          <span className="mt-[6px] text-[11px] font-bold leading-[14px]">20:43:47 PM</span>
          <span className="text-[11px] leading-[13px]">16/05/2024</span>
        </div>
      </footer>
    </div>
  );
};

export default App;
